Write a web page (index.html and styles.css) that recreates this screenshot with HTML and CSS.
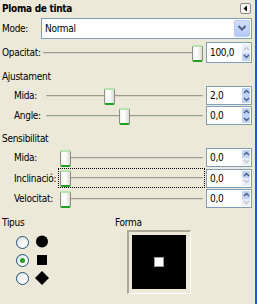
FILE: index.html
```html
<!DOCTYPE html>
<html lang="ca">
<head>
    <meta charset="UTF-8">
    <meta name="viewport" content="width=device-width, initial-scale=1.0">
    <title>Ploma de tinta</title>
    <link rel="stylesheet" href="styles.css">
</head>
<body>
    <div class="dock">
        <div class="title-row">
            <span class="title">Ploma de tinta</span>
            <span class="menu-btn">
                <svg width="9" height="9" viewBox="0 0 9 9"><polygon points="6,1.5 2.5,4.5 6,7.5" fill="#000"/></svg>
            </span>
        </div>

        <div class="mode-row">
            <span class="lbl">Mode:</span>
            <div class="combo">
                <span class="combo-text">Normal</span>
                <span class="combo-btn">
                    <svg width="10" height="8" viewBox="0 0 10 8"><polyline points="1.5,2 5,5.5 8.5,2" fill="none" stroke="#4d6185" stroke-width="2"/></svg>
                </span>
            </div>
        </div>

        <div class="scale-grid opacity">
            <span class="lbl">Opacitat:</span>
            <div class="slider"><div class="track"><span class="thumb" style="--p:1"></span></div></div>
            <div class="spin"><span class="val">100,0</span><span class="arrows"><span class="arr off up"></span><span class="arr down"></span></span></div>
        </div>

        <div class="section-title">Ajustament</div>
        <div class="scale-grid adjust">
            <span class="lbl">Mida:</span>
            <div class="slider"><div class="track"><span class="thumb" style="--p:0.395"></span></div></div>
            <div class="spin"><span class="val">2,0</span><span class="arrows"><span class="arr up"></span><span class="arr down"></span></span></div>

            <span class="lbl">Angle:</span>
            <div class="slider"><div class="track"><span class="thumb" style="--p:0.5"></span></div></div>
            <div class="spin"><span class="val">0,0</span><span class="arrows"><span class="arr up"></span><span class="arr down"></span></span></div>
        </div>

        <div class="section-title">Sensibilitat</div>
        <div class="scale-grid sens">
            <span class="lbl">Mida:</span>
            <div class="slider"><div class="track"><span class="thumb" style="--p:0"></span></div></div>
            <div class="spin"><span class="val">0,0</span><span class="arrows"><span class="arr up"></span><span class="arr off down"></span></span></div>

            <span class="lbl">Inclinació:</span>
            <div class="slider focus"><div class="track"><span class="thumb" style="--p:0"></span></div></div>
            <div class="spin"><span class="val">0,0</span><span class="arrows"><span class="arr up"></span><span class="arr off down"></span></span></div>

            <span class="lbl">Velocitat:</span>
            <div class="slider"><div class="track"><span class="thumb" style="--p:0"></span></div></div>
            <div class="spin"><span class="val">0,0</span><span class="arrows"><span class="arr up"></span><span class="arr off down"></span></span></div>
        </div>

        <div class="bottom">
            <div class="tipus">
                <div class="section-title">Tipus</div>
                <div class="radios">
                    <div class="radio-row">
                        <span class="radio"></span>
                        <svg width="14" height="14" viewBox="0 0 14 14"><circle cx="7" cy="6.5" r="6" fill="#000"/></svg>
                    </div>
                    <div class="radio-row">
                        <span class="radio checked"></span>
                        <svg width="14" height="14" viewBox="0 0 14 14"><rect x="2" y="2" width="10" height="10" fill="#000"/></svg>
                    </div>
                    <div class="radio-row">
                        <span class="radio"></span>
                        <svg width="14" height="14" viewBox="0 0 14 14"><polygon points="7,0 14,7 7,14 0,7" fill="#000"/></svg>
                    </div>
                </div>
            </div>
            <div class="forma">
                <div class="section-title">Forma</div>
                <div class="preview">
                    <div class="ink"><span class="nib"></span></div>
                </div>
            </div>
        </div>
    </div>
</body>
</html>
```

FILE: styles.css
```css
body {
    margin: 0;
    background-color: #ece9d8;
    font-family: "DejaVu Sans Condensed", "DejaVu Sans", sans-serif;
    font-size: 10px;
    letter-spacing: -0.3px;
    color: #000;
}

.dock {
    width: 257px;
    height: 304px;
    box-sizing: border-box;
    padding: 0 3px 0 2px;
    border-right: 2px solid #1f56dc;
    background-color: #ece9d8;
}

.title-row {
    display: flex;
    align-items: center;
    justify-content: space-between;
    height: 17px;
}

.title {
    font-weight: bold;
    line-height: 17px;
}

.menu-btn {
    width: 9px;
    height: 9px;
    margin-right: 1px;
    border: 1px solid #8a8a86;
    border-radius: 2px;
    background-color: #f7f6f1;
    display: flex;
}

.mode-row {
    display: flex;
    align-items: center;
    height: 22px;
}

.mode-row .lbl {
    width: 39px;
}

.combo {
    flex: 1;
    height: 21px;
    box-sizing: border-box;
    border: 1px solid #7f9db9;
    background-color: #fff;
    display: flex;
    align-items: center;
    justify-content: space-between;
    padding: 1px;
}

.combo-text {
    padding-left: 2px;
}

.combo-btn {
    width: 16px;
    height: 17px;
    border-radius: 2px;
    background: linear-gradient(#d2defc, #b4c8f6);
    border: 1px solid #b9cbf3;
    box-sizing: border-box;
    display: flex;
    align-items: center;
    justify-content: center;
}

/* sliders with spin buttons */
.scale-grid {
    display: grid;
    grid-template-columns: 29px 1fr 46px;
    column-gap: 1px;
    row-gap: 1px;
    align-items: center;
}

.scale-grid.opacity {
    grid-template-columns: 38px 1fr 46px;
    margin-top: 3px;
    height: 21px;
}

.scale-grid.adjust {
    padding-left: 12px;
    margin-top: 2px;
}

.scale-grid.sens {
    padding-left: 12px;
    margin-top: 2px;
    grid-template-columns: 43px 1fr 46px;
}

.lbl {
    white-space: nowrap;
}

.slider {
    height: 19px;
    padding: 0 2px;
    display: flex;
    align-items: center;
    box-sizing: border-box;
}

.slider.focus {
    outline: 1px dotted #000;
    outline-offset: -1px;
    height: 20px;
}

.track {
    position: relative;
    flex: 1;
    height: 2px;
    border-top: 1px solid #9c9b91;
    background-color: #d9d7cb;
    box-sizing: border-box;
    border-radius: 1px;
}

.thumb {
    position: absolute;
    top: -8px;
    left: calc(var(--p) * (100% - 11px));
    width: 11px;
    height: 17px;
    box-sizing: border-box;
    border: 1px solid #8c8f86;
    border-radius: 2px;
    border-top: 2px solid #b6e3b0;
    border-bottom: 2px solid #21a121;
    background: linear-gradient(to right, #f5f5f0, #ffffff 45%, #dcdcd4);
}

.spin {
    height: 19px;
    box-sizing: border-box;
    border: 1px solid #7f9db9;
    background-color: #fff;
    display: flex;
    justify-content: space-between;
}

.scale-grid.opacity .spin {
    height: 21px;
}

.val {
    padding-left: 3px;
    display: flex;
    align-items: center;
}

.arrows {
    width: 9px;
    display: flex;
    flex-direction: column;
    padding: 1px 0;
}

.arr {
    flex: 1;
    margin: 0 1px 0 0;
    border-radius: 1px;
    background: #c3d3f8 no-repeat center;
}

.arr.up {
    background-image: url("data:image/svg+xml,%3Csvg xmlns='http://www.w3.org/2000/svg' width='7' height='5'%3E%3Cpolyline points='1,4 3.5,1.5 6,4' fill='none' stroke='%234d6185' stroke-width='1.5'/%3E%3C/svg%3E");
}

.arr.down {
    background-image: url("data:image/svg+xml,%3Csvg xmlns='http://www.w3.org/2000/svg' width='7' height='5'%3E%3Cpolyline points='1,1 3.5,3.5 6,1' fill='none' stroke='%234d6185' stroke-width='1.5'/%3E%3C/svg%3E");
}

.arr.off {
    background-color: #e9eef8;
}

.arr.off.up {
    background-image: url("data:image/svg+xml,%3Csvg xmlns='http://www.w3.org/2000/svg' width='7' height='5'%3E%3Cpolyline points='1,4 3.5,1.5 6,4' fill='none' stroke='%23c3c8d2' stroke-width='1.5'/%3E%3C/svg%3E");
}

.arr.off.down {
    background-image: url("data:image/svg+xml,%3Csvg xmlns='http://www.w3.org/2000/svg' width='7' height='5'%3E%3Cpolyline points='1,1 3.5,3.5 6,1' fill='none' stroke='%23c3c8d2' stroke-width='1.5'/%3E%3C/svg%3E");
}

.section-title {
    line-height: 14px;
    margin-top: 7px;
}

/* type & shape */
.bottom {
    display: flex;
    margin-top: 8px;
}

.bottom .section-title {
    margin-top: 0;
}

.tipus {
    width: 113px;
}

.radios {
    margin-top: 3px;
}

.radio-row {
    display: flex;
    align-items: center;
    gap: 6px;
    height: 18px;
    padding-left: 14px;
}

.radio {
    width: 13px;
    height: 13px;
    box-sizing: border-box;
    border: 1px solid #1c5180;
    border-radius: 50%;
    background: linear-gradient(135deg, #dcdcd7, #ffffff 70%);
    display: flex;
    align-items: center;
    justify-content: center;
}

.radio.checked::after {
    content: "";
    width: 5px;
    height: 5px;
    border-radius: 50%;
    background-color: #21a121;
}

.preview {
    width: 64px;
    height: 64px;
    margin-left: 12px;
    box-sizing: border-box;
    border-left: 2px solid #aca899;
    border-top: 2px solid #aca899;
    border-right: 1px solid #fff;
    border-bottom: 1px solid #fff;
    padding: 3px;
}

.ink {
    width: 54px;
    height: 54px;
    background-color: #000;
    display: flex;
    align-items: center;
    justify-content: center;
}

.nib {
    width: 10px;
    height: 10px;
    box-sizing: border-box;
    border: 1px solid #9a9a90;
    background-color: #fff;
}
```
